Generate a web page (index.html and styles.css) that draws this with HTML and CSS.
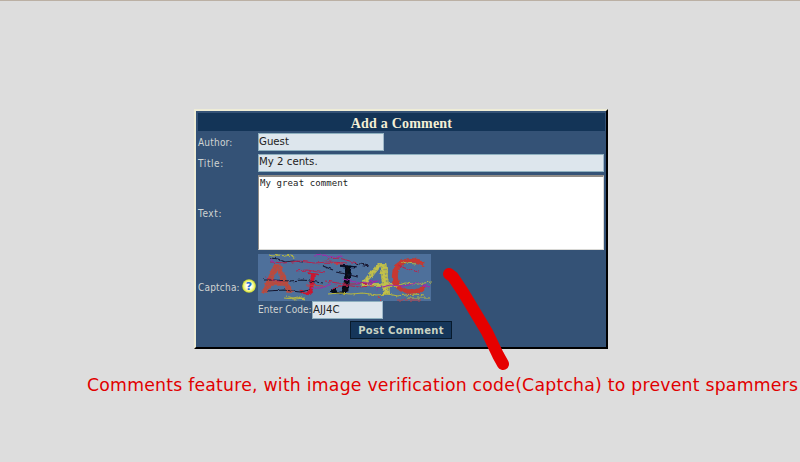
FILE: index.html
```html
<!DOCTYPE html>
<html lang="en">
<head>
<meta charset="utf-8">
<title>Add a Comment</title>
<link rel="stylesheet" href="styles.css">
</head>
<body>
<main class="page">
  <form class="panel">
    <h1 class="heading"><span>Add a Comment</span></h1>
    <div class="row author"><label>Author:</label><div class="field short">Guest</div></div>
    <div class="row title"><label>Title:</label><div class="field">My 2 cents.</div></div>
    <div class="row text"><label>Text:</label><div class="area">My great comment</div></div>
    <div class="row captcha">
      <label><span class="cap-label">Captcha:</span>
        <svg class="help" viewBox="0 0 14 14"><defs><radialGradient id="g"><stop offset=".35" stop-color="#fff"/><stop offset=".7" stop-color="#f3f78a"/><stop offset="1" stop-color="#c9d622"/></radialGradient></defs><circle cx="7" cy="7" r="6.8" fill="url(#g)"/><text x="7" y="11" text-anchor="middle" class="q">?</text></svg>
      </label>
      <div class="verify">
        <svg class="code-image" viewBox="0 0 173 47">
          <defs>
            <filter id="rough" x="-10%" y="-10%" width="120%" height="120%"><feTurbulence type="fractalNoise" baseFrequency=".25" numOctaves="2" seed="4"/><feDisplacementMap in="SourceGraphic" scale="3.5" xChannelSelector="R" yChannelSelector="G"/></filter>
            <pattern id="orange" width="3" height="3" patternUnits="userSpaceOnUse"><rect width="3" height="3" fill="#bd4a3b"/><path d="M0 0h1v1H0zM2 2h1v1H2z" fill="#7a5d72"/></pattern>
            <pattern id="yellow" width="3" height="3" patternUnits="userSpaceOnUse"><rect width="3" height="3" fill="#c3c248"/><path d="M0 0h1v1H0zM2 2h1v1H2z" fill="#899574"/></pattern>
          </defs>
          <rect width="173" height="47" fill="#4e709b"/>
          <g filter="url(#rough)" class="glyphs">
            <text transform="translate(4 38) scale(1.380 1.150)" font-size="32" fill="url(#orange)" stroke="#b94c40" stroke-width="1.300">A</text>
            <text transform="translate(46 35) rotate(7) scale(1.450 1)" font-size="23" class="serif" fill="#cc142e" stroke="#cc142e" stroke-width=".3">J</text>
            <text transform="translate(78 33) rotate(6) scale(1.700 1.100)" font-size="28" class="serif" fill="#070819" stroke="#070819" stroke-width=".6">J</text>
            <text transform="translate(102 40) skewX(7) scale(1.950 1.320)" font-size="32" fill="url(#yellow)" stroke="#c3c248" stroke-width=".3">4</text>
            <text transform="translate(131 39) scale(1.600 1.350)" font-size="34" fill="#c63930" stroke="#c63930" stroke-width=".3">C</text>
          </g>
          <g class="scribbles" filter="url(#rough)">
            <path stroke="#b7b73f" d="M11 1l5 1 4-1 8 1 5-1 4 3M28 42l7 2 5-1 7 2M70 40l12-1 11 1 12-1 13 2 12-1 10 2 16-2 11 1M128 34l11-2 8-3 12 1 14-2M144 8l5 1 9 1M26 44l10 1 11-1M150 44h22"/>
            <path stroke="#161832" d="M12 4l8 1 7 3 9-1 9 1M5 26l12 0 14 1 14-1 20 3M10 37l16-1 16 2 10-2M65 12l10 4M78 18l22 5M97 9l14 3"/>
            <path stroke="#b7244d" d="M13 8l13 1 15-2 15 2 15-1 18 1M69 5l12-1 18 5M37 17l12-1 18 3M67 27l20 3 12 0 14-1M140 11l9 4 12 3M74 35l13-4 13 2 16-1M7 24l17 4"/>
            <path stroke="#a327ab" d="M14 5l2 5M56 2l10-1 9 2 10-1M85 25l16 4 17-2M53 34h11l9-4M118 35l14-4 14 1 12-3 14 4M109 31l13-5"/>
            <path stroke="#c23c45" d="M120 42l3 5M138 46h25M48 31l19 1M74 9l10 1"/>
          </g>
        </svg>
        <div class="entry"><span class="entry-label">Enter Code:</span><div class="field code">AJJ4C</div></div>
      </div>
    </div>
    <button type="button" class="post"><span>Post Comment</span></button>
  </form>
  <p class="caption">Comments feature, with image verification code(Captcha) to prevent spammers</p>
  <svg class="marker" viewBox="0 0 70 110"><path d="M8 9L12 12 22 27 34 47 46 67 57 90 62 99" /></svg>
</main>
</body>
</html>
```
FILE: styles.css
```css
* { box-sizing: border-box; }
body { margin: 0; background: #ddd; overflow: hidden; }
.page {
  position: relative;
  height: 462px;
  border-top: 1px solid #bbb0a4;
  padding-top: 108px;
  font-family: "DejaVu Sans", sans-serif;
}
.panel {
  width: 414px;
  height: 240px;
  margin-left: 194px;
  padding: 2px 1px;
  border: 2px solid;
  border-color: #eeecd6 #000 #000 #eeecd6;
  background: #345276;
}
.heading {
  width: 407px;
  height: 18px;
  margin: 0 0 2px 1px;
  background: #133457;
  color: #f4efd5;
  font: bold 14px/21px "Liberation Serif", serif;
  text-align: center;
}
.heading span { letter-spacing: .2px; }
.row { display: grid; grid-template-columns: 61px 346px; align-items: center; }
label, .entry-label {
  color: #d0d4d2;
  font: 10px/12px "DejaVu Sans Condensed", "DejaVu Sans", sans-serif;
  letter-spacing: .2px;
}
label { padding: 2px 0 0 1px; }
.title label, .text label { letter-spacing: .6px; }
.author { height: 18px; }
.title { height: 18px; margin-top: 3px; }
.text { height: 76px; margin-top: 3px; }
.captcha { height: 66px; margin-top: 3px; }
.field {
  height: 18px;
  padding-left: 0;
  border: 1px solid #8eb0bf;
  border-right-color: #a0b8c8;
  background: #dde6ed;
  color: #222;
  font-size: 10.2px;
  line-height: 15px;
}
.title .field { line-height: 14px; }
.short { width: 126px; }
.area {
  height: 75px;
  padding: 0 0 0 1px;
  border: 1px solid #d8d8d5;
  border-top: 2px solid #918d88;
  border-left-color: #918d88;
  background: #fff;
  color: #222;
  font: 9px/13px "DejaVu Sans Mono", monospace;
  letter-spacing: .1px;
}
.text .area { align-self: start; }
.captcha label { display: flex; align-items: center; }
.cap-label { width: 44px; }
.help { width: 14px; height: 14px; margin-bottom: 4px; }
.q { fill: #246bd3; font: bold 11px "DejaVu Sans", sans-serif; }
.verify { align-self: start; }
.code-image { display: block; width: 173px; height: 47px; overflow: visible; }
.glyphs { font-family: "DejaVu Sans", sans-serif; }
.serif { font-family: "DejaVu Serif", serif; }
.scribbles { fill: none; stroke-width: 1.1; }
.entry { display: flex; align-items: center; height: 18px; }
.entry-label { width: 54px; white-space: nowrap; letter-spacing: .05px; }
.code { width: 71px; }
.post {
  display: block;
  width: 102px;
  height: 18px;
  margin: 1px 0 0 153px;
  padding: 0;
  border: 1px solid #071a2c;
  background: #15365a;
  color: #c9d3c2;
  font: bold 10px/17px "DejaVu Sans", sans-serif;
  letter-spacing: .3px;
}
.caption {
  margin: 25px 0 0 87px;
  color: #e10000;
  font-size: 17.3px;
  letter-spacing: .22px;
  line-height: 22px;
  white-space: nowrap;
}
.marker {
  position: absolute;
  left: 441px;
  top: 264px;
  width: 70px;
  height: 110px;
  fill: none;
  stroke: #e60000;
  stroke-width: 12;
  stroke-linecap: round;
  stroke-linejoin: round;
}
```
